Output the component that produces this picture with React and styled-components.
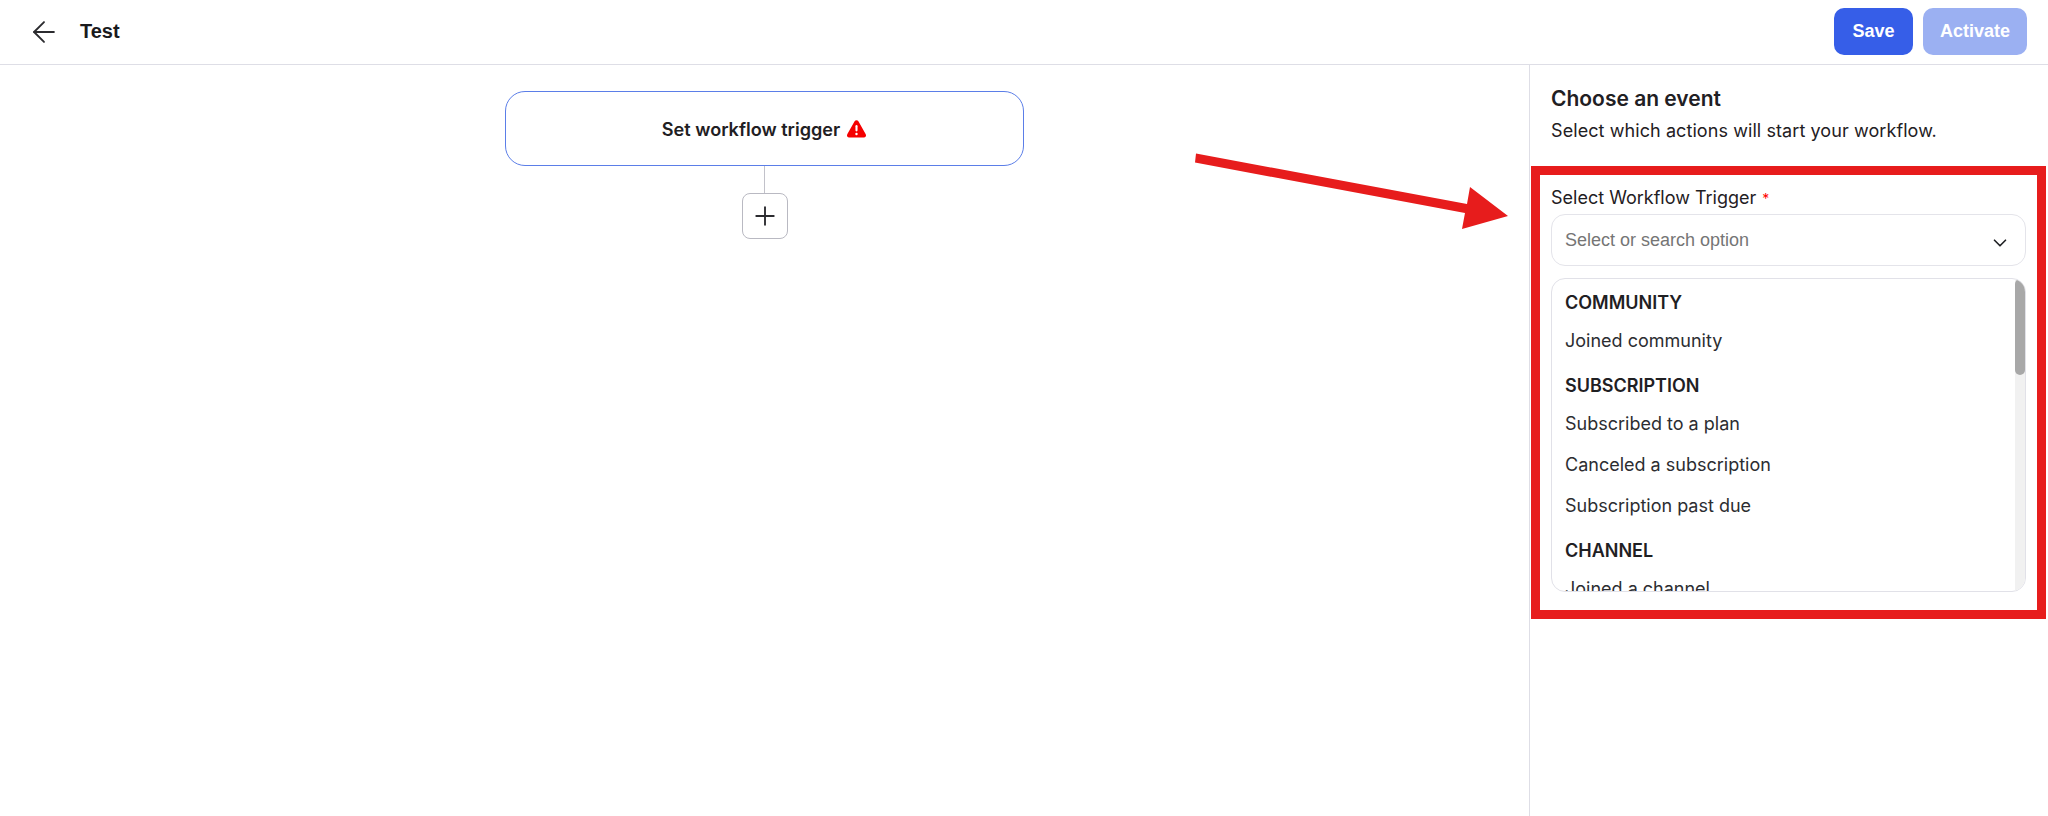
import React from "react"
import styled, { createGlobalStyle } from "styled-components"
import { ArrowLeft, ChevronDown, Plus } from "lucide-react"

const GlobalStyle = createGlobalStyle`
    html, body {
        margin: 0;
        background: #fff;
        font-family: "Inter", "Liberation Sans", sans-serif;
        color: #1f2023;
    }
    * { box-sizing: border-box; }
`

const Page = styled.div`
    position: relative;
    height: 816px;
    overflow: hidden;
    display: flex;
    flex-direction: column;
`

const Header = styled.header`
    height: 65px;
    flex: none;
    display: flex;
    align-items: center;
    padding: 0 21px 1px 27px;
    border-bottom: 1px solid #dedee6;
`

const BackButton = styled.button`
    display: flex;
    padding: 0;
    border: 0;
    background: none;
    color: #2b2b2f;
    margin-right: 19px;
`

const Title = styled.h1`
    flex: 1;
    margin: 0;
    font: 700 20px "Liberation Sans", sans-serif;
    color: #1a1a1d;
`

const HeaderButton = styled.button`
    height: 47px;
    padding: 0 ${p => p.$pad}px;
    margin-left: 10px;
    border: 0;
    border-radius: 10px;
    background: ${p => (p.disabled ? "#9bb0f2" : "#365ee8")};
    color: #fff;
    font: 700 18px "Liberation Sans", sans-serif;
`

const Body = styled.div`
    flex: 1;
    display: flex;
    min-height: 0;
`

const Canvas = styled.main`
    flex: 1;
    display: flex;
    flex-direction: column;
    align-items: center;
    padding-top: 26px;
`

const TriggerNode = styled.div`
    width: 519px;
    height: 75px;
    flex: none;
    display: flex;
    align-items: center;
    justify-content: center;
    gap: 6px;
    border: 1px solid #5b7ee8;
    border-radius: 20px;
    font-size: 18.1px;
    font-weight: 600;
`

const Connector = styled.div`
    width: 1px;
    height: 27px;
    background: #c2c2ca;
`

const AddButton = styled.button`
    width: 46px;
    height: 46px;
    display: flex;
    align-items: center;
    justify-content: center;
    padding: 0;
    background: #fff;
    border: 1px solid #b9b9c2;
    border-radius: 8px;
    color: #2b2b2f;
`

const Panel = styled.aside`
    width: 519px;
    flex: none;
    border-left: 1px solid #dedee6;
    padding: 20px 22px 0 21px;
`

const PanelTitle = styled.h2`
    margin: 0 0 6px;
    font-size: 21px;
    line-height: 28px;
    font-weight: 600;
`

const PanelText = styled.p`
    margin: 0 0 43px;
    font-size: 18px;
    line-height: 24px;
    letter-spacing: 0.08px;
`

const FieldLabel = styled.label`
    display: block;
    height: 24px;
    margin-bottom: 4px;
    font-size: 18px;
    line-height: 24px;
    span {
        margin-left: 6px;
        color: #f00;
        font-size: 14px;
    }
`

const SelectBox = styled.div`
    height: 52px;
    display: flex;
    align-items: center;
    justify-content: space-between;
    padding: 0 14px 0 13px;
    border: 1px solid #e4e4ea;
    border-radius: 14px;
    color: #757575;
    font: 400 18px "Liberation Sans", sans-serif;
    svg { color: #1f2023; margin-top: 5px; }
`

const OptionList = styled.div`
    position: relative;
    height: 314px;
    margin-top: 12px;
    overflow: hidden;
    border: 1px solid #e1e1e8;
    border-radius: 14px;
`

const OptionGroups = styled.div`
    padding: 7px 13px 0;
`

const GroupName = styled.div`
    height: 34px;
    margin-top: ${p => (p.$first ? 0 : 8)}px;
    font-size: 18px;
    line-height: 34px;
    font-weight: 600;
`

const Option = styled.div`
    height: 41px;
    font-size: 18px;
    line-height: 41px;
    color: #2c2d31;
`

// scrollbars are hidden in the headless browser, so this one is drawn
const ScrollTrack = styled.div`
    position: absolute;
    top: 0;
    right: 0;
    bottom: 0;
    width: 10px;
    background: #f1f1f1;
`

const ScrollThumb = styled.div`
    height: 96px;
    border-radius: 5px;
    background: #a8a8a8;
`

const RedFrame = styled.div`
    position: absolute;
    left: 1531px;
    top: 166px;
    width: 515px;
    height: 453px;
    border: 9px solid #e71c1c;
`

const ArrowLayer = styled.svg`
    position: absolute;
    inset: 0;
    pointer-events: none;
`

const groups = [
    { name: "COMMUNITY", options: ["Joined community"] },
    { name: "SUBSCRIPTION", options: ["Subscribed to a plan", "Canceled a subscription", "Subscription past due"] },
    { name: "CHANNEL", options: ["Joined a channel"] },
]

const WarningIcon = () => (
    <svg width="21" height="20" viewBox="0 0 20 19">
        <path d="M10 1.2c.8 0 1.4.4 1.8 1l7 12.4c.8 1.4-.2 3.1-1.8 3.1H3c-1.6 0-2.6-1.7-1.8-3.1l7-12.4c.4-.6 1-1 1.8-1z" fill="#f50000" />
        <rect x="9" y="5.8" width="2" height="6" rx="1" fill="#fff" />
        <circle cx="10" cy="14.3" r="1.15" fill="#fff" />
    </svg>
)

const App = () => {
    return (
        <Page>
            <GlobalStyle />
            <Header>
                <BackButton><ArrowLeft size={34} strokeWidth={1.3} /></BackButton>
                <Title>Test</Title>
                <HeaderButton $pad={18.5}>Save</HeaderButton>
                <HeaderButton $pad={17} disabled>Activate</HeaderButton>
            </Header>
            <Body>
                <Canvas>
                    <TriggerNode>Set workflow trigger <WarningIcon /></TriggerNode>
                    <Connector />
                    <AddButton><Plus size={30} strokeWidth={1.5} /></AddButton>
                </Canvas>
                <Panel>
                    <PanelTitle>Choose an event</PanelTitle>
                    <PanelText>Select which actions will start your workflow.</PanelText>
                    <FieldLabel>Select Workflow Trigger<span>*</span></FieldLabel>
                    <SelectBox>
                        Select or search option
                        <ChevronDown size={22} strokeWidth={1.8} />
                    </SelectBox>
                    <OptionList>
                        <OptionGroups>
                            {groups.map((group, i) => (
                                <div key={group.name}>
                                    <GroupName $first={i === 0}>{group.name}</GroupName>
                                    {group.options.map(option => <Option key={option}>{option}</Option>)}
                                </div>
                            ))}
                        </OptionGroups>
                        <ScrollTrack><ScrollThumb /></ScrollTrack>
                    </OptionList>
                </Panel>
            </Body>
            <RedFrame />
            <ArrowLayer width="2048" height="816" viewBox="0 0 2048 816">
                <polygon points="1196,153.5 1467,204 1470,187 1508,216 1462,229 1465,213 1195,162.5" fill="#e71c1c" />
            </ArrowLayer>
        </Page>
    )
}

export default App
